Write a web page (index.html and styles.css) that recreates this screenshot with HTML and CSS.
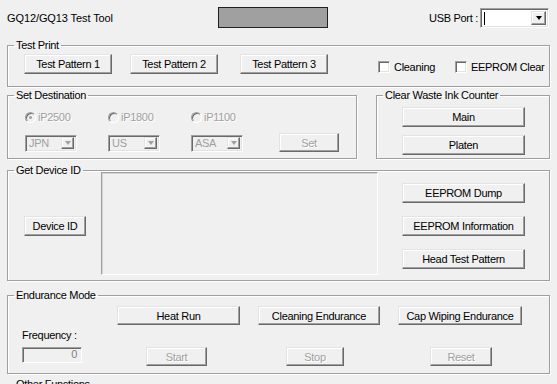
FILE: index.html
```html
<!DOCTYPE html>
<html>
  <head>
    <meta charset="utf-8" />
    <title>GQ12/GQ13 Test Tool</title>
    <link rel="stylesheet" href="styles.css">
  </head>

  <body>
    <div class="dialog">
      <!-- top line: title, status, port -->
      <div class="header">
        <span class="title">GQ12/GQ13 Test Tool</span>
        <span class="status-box"></span>
        <span class="usb">
          <span class="usb-label">USB Port :</span>
          <span class="combo combo-usb">
            <span class="caret"></span>
            <span class="combo-btn"><i class="arrow"></i></span>
          </span>
        </span>
      </div>

      <fieldset class="group group-print">
        <legend>Test Print</legend>
        <div class="print-row">
          <button class="btn btn-pattern">Test Pattern 1</button>
          <button class="btn btn-pattern">Test Pattern 2</button>
          <button class="btn btn-pattern">Test Pattern 3</button>
          <label class="check check-clean"><span class="box"></span>Cleaning</label>
          <label class="check"><span class="box"></span>EEPROM Clear</label>
        </div>
      </fieldset>

      <div class="mid-row">
        <fieldset class="group group-dest">
          <legend>Set Destination</legend>
          <div class="dest-grid">
            <span class="radio off"><span class="dot checked"></span>iP2500</span>
            <span class="radio off"><span class="dot"></span>iP1800</span>
            <span class="radio off"><span class="dot"></span>iP1100</span>
            <span></span>
            <span class="combo combo-off"><span class="combo-text">JPN</span><span class="combo-btn"><i class="arrow"></i></span></span>
            <span class="combo combo-off"><span class="combo-text">US</span><span class="combo-btn"><i class="arrow"></i></span></span>
            <span class="combo combo-off"><span class="combo-text">ASA</span><span class="combo-btn"><i class="arrow"></i></span></span>
            <button class="btn btn-set" disabled>Set</button>
          </div>
        </fieldset>

        <fieldset class="group group-waste">
          <legend>Clear Waste Ink Counter</legend>
          <div class="waste-col">
            <button class="btn btn-wide">Main</button>
            <button class="btn btn-wide">Platen</button>
          </div>
        </fieldset>
      </div>

      <fieldset class="group group-device">
        <legend>Get Device ID</legend>
        <div class="device-row">
          <button class="btn btn-device">Device ID</button>
          <div class="device-text"></div>
          <div class="device-col">
            <button class="btn btn-wide">EEPROM Dump</button>
            <button class="btn btn-wide">EEPROM Information</button>
            <button class="btn btn-wide">Head Test Pattern</button>
          </div>
        </div>
      </fieldset>

      <fieldset class="group group-endure">
        <legend>Endurance Mode</legend>
        <div class="endure-row">
          <button class="btn btn-heat">Heat Run</button>
          <button class="btn btn-clean">Cleaning Endurance</button>
          <button class="btn btn-cap">Cap Wiping Endurance</button>
        </div>
        <div class="endure-bottom">
          <div class="freq">
            <div class="freq-label">Frequency :</div>
            <div class="freq-box">0</div>
          </div>
          <button class="btn btn-start" disabled>Start</button>
          <button class="btn btn-stop" disabled>Stop</button>
          <button class="btn btn-reset" disabled>Reset</button>
        </div>
      </fieldset>

      <fieldset class="group group-more">
        <legend>Other Functions</legend>
      </fieldset>
    </div>
  </body>
</html>
```

FILE: styles.css
```css
/* classic windows dialog look */
* {
  box-sizing: border-box;
}
body {
  margin: 0;
  width: 557px;
  height: 384px;
  overflow: hidden;
  background: #f0f0f0;
  font-family: "Liberation Sans", Arial, sans-serif;
  font-size: 11px;
  letter-spacing: -0.3px;
  color: #000;
}
.dialog {
  padding: 7px 7px 0;
}

/* header */
.header {
  display: flex;
  align-items: center;
  height: 21px;
}
.title {
  width: 211px;
  letter-spacing: -0.1px;
}
.status-box {
  width: 110px;
  height: 21px;
  background: #a0a0a0;
  border: 1px solid #202020;
}
.usb {
  display: flex;
  align-items: center;
  margin-left: auto;
  margin-right: 1px;
}
.usb-label {
  margin-right: 2px;
}

/* combo box */
.combo {
  display: flex;
  align-items: stretch;
  padding: 2px;
  border: 1px solid;
  border-color: #a0a0a0 #fff #fff #a0a0a0;
  box-shadow: inset 1px 1px #696969, inset -1px -1px #e3e3e3;
  background: #fff;
}
.combo-usb {
  width: 69px;
  height: 20px;
}
.caret {
  width: 1px;
  margin: 1px 0 0 1px;
  background: #000;
}
.combo-btn {
  display: flex;
  align-items: center;
  justify-content: center;
  width: 15px;
  margin-left: auto;
  background: #f0f0f0;
  border: 1px solid;
  border-color: #e3e3e3 #696969 #696969 #e3e3e3;
  box-shadow: inset -1px -1px #a0a0a0, inset 1px 1px #fff;
}
.arrow {
  width: 0;
  height: 0;
  border-left: 3px solid transparent;
  border-right: 3px solid transparent;
  border-top: 4px solid #000;
}
.combo-off {
  width: 52px;
  height: 17px;
  padding: 1px 2px 2px 2px;
  background: #f0f0f0;
  align-self: end;
}
.combo-text {
  color: #a0a0a0;
  line-height: 12px;
  padding-left: 1px;
}
.combo-off .combo-btn {
  width: 13px;
}
.combo-off .arrow {
  border-top-color: #a0a0a0;
}

/* buttons */
.btn {
  margin: 0;
  padding: 0;
  height: 20px;
  font: inherit;
  letter-spacing: inherit;
  color: #000;
  background: #f0f0f0;
  border: 1px solid;
  border-color: #e3e3e3 #696969 #696969 #e3e3e3;
  box-shadow: inset -1px -1px #a0a0a0, inset 1px 1px #fff;
  border-radius: 0;
}
.btn:disabled {
  color: #a0a0a0;
  text-shadow: 1px 1px #fff;
}

/* group boxes */
.group {
  margin: 0;
  padding: 0;
  min-width: 0;
  border: 1px solid #a0a0a0;
  box-shadow: inset 1px 1px #fff, 1px 1px #fff;
}
.group legend {
  margin-left: 6px;
  padding: 0 2px;
  line-height: 14px;
}

/* test print */
.group-print {
  height: 49px;
  margin-top: 10px;
}
.print-row {
  display: flex;
  align-items: center;
  padding: 2px 0 0 16px;
}
.btn-pattern {
  width: 88px;
}
.btn-pattern:nth-child(2) {
  margin-left: 18px;
}
.btn-pattern:nth-child(3) {
  margin-left: 22px;
}
.check {
  display: flex;
  align-items: center;
  gap: 4px;
  margin-top: 6px;
}
.check-clean {
  width: 77px;
  margin-left: 50px;
}
.box {
  width: 12px;
  height: 12px;
  border: 1px solid;
  border-color: #a0a0a0 #fff #fff #a0a0a0;
  box-shadow: inset 1px 1px #696969, inset -1px -1px #e3e3e3;
  background: #fff;
}

/* destination + waste ink */
.mid-row {
  display: flex;
  gap: 19px;
  margin-top: 1px;
}
.group-dest {
  width: 350px;
  height: 71px;
}
.dest-grid {
  display: grid;
  grid-template-columns: 83px 83px 88px 60px;
  grid-template-rows: 14px 19px;
  row-gap: 9px;
  align-items: center;
  padding: 8px 0 0 17px;
}
.radio {
  display: flex;
  align-items: center;
  gap: 2px;
}
.radio.off {
  color: #a0a0a0;
  text-shadow: 1px 1px #fff;
}
.dot {
  display: flex;
  align-items: center;
  justify-content: center;
  width: 11px;
  height: 11px;
  border-radius: 50%;
  border: 1px solid;
  border-color: #a0a0a0 #fff #fff #a0a0a0;
  box-shadow: inset 1px 1px #696969;
  background: #f0f0f0;
}
.dot.checked::after {
  content: "";
  width: 3px;
  height: 3px;
  border-radius: 50%;
  background: #a0a0a0;
}
.btn-set {
  width: 60px;
  height: 19px;
}
.group-waste {
  width: 174px;
  height: 71px;
}
.waste-col {
  display: flex;
  flex-direction: column;
  gap: 8px;
  padding: 5px 0 0 25px;
}
.btn-wide {
  width: 123px;
}

/* device id */
.group-device {
  height: 118px;
  margin-top: 4px;
}
.device-row {
  display: flex;
  align-items: flex-start;
  padding-left: 16px;
}
.btn-device {
  width: 62px;
  margin-top: 39px;
}
.device-text {
  width: 277px;
  height: 103px;
  margin: -5px 0 0 15px;
  border: 1px solid;
  border-color: #a0a0a0 #fff #fff #a0a0a0;
  box-shadow: inset 1px 1px #d4d4d4;
}
.device-col {
  display: flex;
  flex-direction: column;
  gap: 13px;
  margin: 6px 0 0 24px;
}

/* endurance */
.group-endure {
  height: 86px;
  margin-top: 7px;
}
.endure-row {
  display: flex;
  gap: 18px;
  padding: 4px 0 0 109px;
}
.endure-row .btn {
  height: 19px;
}
.btn-heat {
  width: 123px;
}
.btn-clean {
  width: 122px;
}
.btn-cap {
  width: 124px;
}
.endure-bottom {
  display: flex;
  align-items: flex-start;
  padding: 4px 0 0 14px;
}
.freq {
  width: 60px;
}
.freq-label {
  height: 13px;
  line-height: 13px;
}
.freq-box {
  height: 16px;
  margin-top: 5px;
  padding-right: 4px;
  text-align: right;
  line-height: 13px;
  color: #808080;
  border: 1px solid;
  border-color: #a0a0a0 #fff #fff #a0a0a0;
  box-shadow: inset 1px 1px #696969;
}
.endure-bottom .btn {
  height: 19px;
  margin-top: 18px;
}
.btn-start {
  width: 61px;
  margin-left: 64px;
}
.btn-stop {
  width: 58px;
  margin-left: 79px;
}
.btn-reset {
  width: 62px;
  margin-left: 86px;
}

.group-more {
  height: 40px;
  margin-top: 3px;
}
```
